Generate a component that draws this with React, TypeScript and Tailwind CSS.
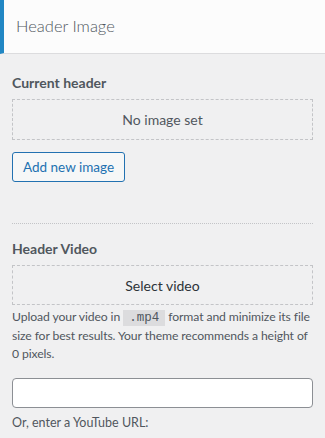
import React from "react";

const font = { fontFamily: 'Lato, "Open Sans", sans-serif' };

const App = () => {
  return (
    <div className="min-h-screen w-[325px] bg-[#f0f0f1] text-[#50575e]" style={font}>
      {/* Section title */}
      <div className="h-[54px] flex items-center bg-[#fcfcfc] border-l-4 border-[#2187c4] border-b border-b-[#dcdcde] pl-3">
        <h2 className="text-[16.5px] font-light text-[#50575e]">Header Image</h2>
      </div>

      <div className="px-3 pt-[20px]">
        {/* Current header */}
        <p className="text-[14px] font-bold leading-[18px]">Current header</p>
        <div className="mt-[7px] h-[41px] flex items-center justify-center border border-dashed border-[#c3c4c7] text-[14px]">
          No image set
        </div>
        <button className="mt-[12px] h-[30px] px-[10px] rounded-[3px] border border-[#2271b1] bg-[#f6f7f7] text-[#2271b1] text-[13.5px]">
          Add new image
        </button>

        <div className="mt-[41px] border-t border-dotted border-[#c3c4c7]" />

        {/* Header video */}
        <p className="mt-[16px] text-[14px] font-bold leading-[18px]">Header Video</p>
        <div className="mt-[7px] h-[40px] flex items-center justify-center border border-dashed border-[#c3c4c7] text-[14px] font-normal text-[#2c3338]">
          Select video
        </div>
        <p className="mt-[3px] text-[12.2px] leading-[18px] tracking-[-0.1px]">
          Upload your video in{" "}
          <code
            className="bg-[#dcdcde] px-[6px] py-[1px] text-[12.5px] tracking-normal"
            style={{ fontFamily: '"Liberation Mono", monospace' }}
          >
            .mp4
          </code>{" "}
          format and minimize its file size for best results. Your theme recommends a height of 0 pixels.
        </p>
        <input type="text" className="mt-[15px] block w-full h-[30px] rounded-[4px] border border-[#8c8f94] bg-white" />
        <p className="mt-[6px] text-[12.5px] leading-[18px]">Or, enter a YouTube URL:</p>
      </div>
    </div>
  );
};

export default App;
